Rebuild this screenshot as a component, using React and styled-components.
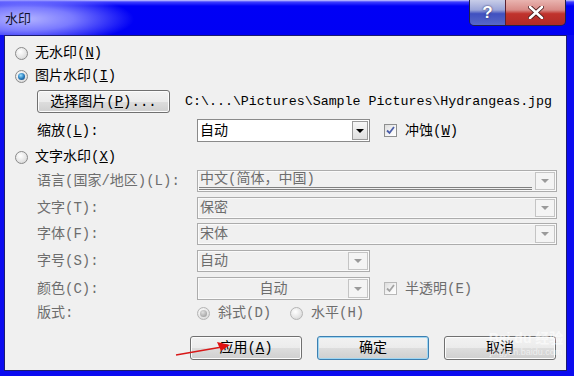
import React from 'react';
import styled, { createGlobalStyle, css } from 'styled-components';

const GlobalStyle = createGlobalStyle`
  html, body {
    margin: 0;
    padding: 0;
    background: #0a0af2;
  }
  body {
    font-family: "Liberation Mono", "Noto Sans CJK SC", monospace;
    font-size: 14px;
  }
`;

const Window = styled.div`
  position: relative;
  width: 574px;
  height: 376px;
  display: flex;
  flex-direction: column;
  background: #0b0bf0;
  overflow: hidden;
`;

const TitleBar = styled.div`
  height: 35px;
  flex: none;
  display: flex;
  align-items: flex-start;
  background:
    radial-gradient(ellipse 110px 26px at 24px 19px, #b4b4ff 0%, #7a7aff 45%, rgba(40, 40, 255, 0) 100%),
    linear-gradient(to bottom, #d0d0ff 0, #4040ff 2px, #0000f6 6px, #0000f4 100%);
`;

const Title = styled.div`
  padding: 10px 0 0 5px;
  line-height: 16px;
  font-family: "Noto Sans CJK SC", sans-serif;
  font-size: 13px;
  color: #10102a;
`;

const Controls = styled.div`
  margin-left: auto;
  margin-right: 8px;
  display: flex;
  height: 25px;
  border: 1px solid #20204a;
  border-top: none;
  border-radius: 0 0 5px 5px;
  overflow: hidden;
`;

const CapButton = styled.div`
  display: flex;
  align-items: center;
  justify-content: center;
  width: ${p => p.$w}px;
  height: 100%;
  font-family: "Liberation Sans", sans-serif;
  font-weight: bold;
  font-size: 17px;
  color: #fff;
  text-shadow: 0 0 2px #20205a;
  ${p => p.$close ? css`
    background: linear-gradient(to bottom, #e9b4b0 0%, #d88a86 40%, #c0322c 55%, #b02a26 100%);
    border-left: 1px solid #5a2030;
  ` : css`
    background: linear-gradient(to bottom, #c8cde8 0%, #9aa4d8 40%, #4050c0 55%, #5868c8 100%);
  `}
`;

const Frame = styled.div`
  flex: 1;
  display: flex;
  padding: 0 7px 5px 4px;
`;

const Panel = styled.div`
  flex: 1;
  display: flex;
  flex-direction: column;
  padding-top: 6px;
  background: #f0f0f0;
  border: 1px solid #1c1c70;
  color: #000;
`;

const Row = styled.div`
  display: flex;
  align-items: center;
  flex: none;
  height: ${p => p.$h}px;
  padding-left: ${p => p.$indent}px;
  line-height: 16px;
  white-space: nowrap;
  color: ${p => (p.$disabled ? '#6d6d6d' : '#000')};
`;

const Radio = styled.span`
  position: relative;
  flex: none;
  width: 13px;
  height: 13px;
  box-sizing: border-box;
  border-radius: 50%;
  border: 1px solid ${p => (p.$disabled ? '#b4b4b4' : '#8a8a8a')};
  background: radial-gradient(circle at 40% 35%, #ffffff 0%, #e6e6e6 55%, #cfcfcf 100%);
  margin-right: ${p => p.$gap || 7}px;
  ${p => p.$checked && css`
    &::after {
      content: '';
      position: absolute;
      left: 2px;
      top: 2px;
      width: 7px;
      height: 7px;
      border-radius: 50%;
      background: ${p.$disabled
        ? 'radial-gradient(circle at 40% 35%, #e0e0e0 0%, #a8a8a8 70%, #909090 100%)'
        : 'radial-gradient(circle at 40% 35%, #9be0ff 0%, #2a7fc0 50%, #123a6a 100%)'};
    }
  `}
`;

const Label = styled.span`
  width: ${p => (p.$w ? `${p.$w}px` : 'auto')};
  flex: none;
`;

const PushButton = styled.div`
  display: flex;
  align-items: center;
  justify-content: center;
  flex: none;
  box-sizing: border-box;
  width: ${p => p.$w}px;
  height: ${p => p.$h || 24}px;
  border-radius: 3px;
  border: 1px solid ${p => (p.$default ? '#3c7fb1' : '#707070')};
  background: linear-gradient(to bottom, #f2f2f2 0%, #ebebeb 50%, #dddddd 51%, #cfcfcf 100%);
  box-shadow: inset 0 0 0 1px ${p => (p.$default ? '#9fd6f2' : '#fcfcfc')};
  line-height: 16px;
`;

const PathText = styled.span`
  margin-left: 15px;
  font-family: "Liberation Mono", monospace;
  font-size: 13.3px;
`;

const SelectBox = styled.div`
  display: flex;
  flex: none;
  box-sizing: border-box;
  width: ${p => p.$w}px;
  height: ${p => p.$h}px;
  border: 1px solid ${p => (p.$enabled ? '#8a8a8a' : '#acacac')};
  background: ${p => (p.$enabled ? '#fff' : '#f0f0f0')};
  box-shadow: ${p => (p.$enabled ? 'none' : 'inset 0 0 0 1px #fafafa')};
  color: ${p => (p.$enabled ? '#000' : '#6d6d6d')};
`;

const SelectText = styled.div`
  flex: 1;
  display: flex;
  align-items: center;
  justify-content: ${p => (p.$center ? 'center' : 'flex-start')};
  padding-left: 2px;
  ${p => p.$underline && css`
    margin: 0 2px 1px 1px;
    padding-left: 1px;
    border-bottom: 3px double #808080;
  `}
`;

const DropButton = styled.div`
  display: flex;
  align-items: center;
  justify-content: center;
  width: ${p => (p.$enabled ? 16 : 20)}px;
  margin: 1px;
  box-sizing: border-box;
  border: 1px solid ${p => (p.$enabled ? '#9a9a9a' : '#c4c4c4')};
  background: ${p => (p.$enabled ? 'linear-gradient(#f6f6f6, #e0e0e0)' : '#f4f4f4')};
`;

const Arrow = styled.span`
  width: 0;
  height: 0;
  border-left: 4px solid transparent;
  border-right: 4px solid transparent;
  border-top: 4px solid ${p => (p.$enabled ? '#000' : '#9a9a9a')};
`;

const CheckWrap = styled.span`
  display: flex;
  align-items: center;
  margin-left: 14px;
  color: ${p => (p.$disabled ? '#6d6d6d' : '#000')};
`;

const CheckBox = styled.span`
  display: flex;
  align-items: center;
  justify-content: center;
  flex: none;
  width: 13px;
  height: 13px;
  box-sizing: border-box;
  margin-right: 8px;
  border: 1px solid ${p => (p.$disabled ? '#b8b8b8' : '#8e8f8f')};
  background: linear-gradient(135deg, #dcdcdc 0%, #f6f6f6 60%, #ffffff 100%);
`;

const ButtonRow = styled.div`
  display: flex;
  justify-content: flex-end;
  gap: 15px;
  padding: 12px 10px 0 0;
`;

const Arrowhead = styled.svg`
  position: absolute;
  left: 170px;
  top: 336px;
`;

const Watermark = styled.div`
  position: absolute;
  left: 488px;
  top: 329px;
  width: 76px;
  display: flex;
  flex-direction: column;
  align-items: center;
  color: rgba(255, 255, 255, 0.6);
  font-family: "Liberation Sans", "Noto Sans CJK SC", sans-serif;
  pointer-events: none;
`;

const WatermarkBig = styled.span`
  font-size: 14px;
  font-weight: bold;
  line-height: 18px;
`;

const WatermarkSmall = styled.span`
  font-size: 9px;
  line-height: 11px;
`;

const Check = ({ disabled }) => (
  <svg width="9" height="9" viewBox="0 0 9 9">
    <path d="M1 4.5 L3.5 7 L8 1" fill="none" stroke={disabled ? '#a4a4a4' : '#4b5ea8'} strokeWidth="1.8" />
  </svg>
);

const Select = ({ w, h, enabled, center, underline, children }) => (
  <SelectBox $w={w} $h={h} $enabled={enabled}>
    <SelectText $center={center} $underline={underline}>{children}</SelectText>
    <DropButton $enabled={enabled}><Arrow $enabled={enabled} /></DropButton>
  </SelectBox>
);

export default function App() {
  return (
    <>
      <GlobalStyle />
      <Window>
        <TitleBar>
          <Title>水印</Title>
          <Controls>
            <CapButton $w={35}>?</CapButton>
            <CapButton $w={59} $close>
              <svg width="16" height="13" viewBox="0 0 16 13">
                <path d="M2 1 L14 12 M14 1 L2 12" stroke="#4a1a1a" strokeWidth="4.4" strokeLinecap="round" />
                <path d="M2 1 L14 12 M14 1 L2 12" stroke="#fff" strokeWidth="2.6" strokeLinecap="round" />
              </svg>
            </CapButton>
          </Controls>
        </TitleBar>
        <Frame>
          <Panel>
            <Row $h={22} $indent={10}>
              <Radio />
              <span>无水印(<u>N</u>)</span>
            </Row>
            <Row $h={24} $indent={10}>
              <Radio $checked />
              <span>图片水印(<u>I</u>)</span>
            </Row>
            <Row $h={27} $indent={32}>
              <PushButton $w={133} $h={23}>选择图片(<u>P</u>)...</PushButton>
              <PathText>C:\...\Pictures\Sample Pictures\Hydrangeas.jpg</PathText>
            </Row>
            <Row $h={31} $indent={32}>
              <Label $w={160}>缩放(<u>L</u>):</Label>
              <Select w={173} h={23} enabled>自动</Select>
              <CheckWrap>
                <CheckBox><Check /></CheckBox>
                <span>冲蚀(<u>W</u>)</span>
              </CheckWrap>
            </Row>
            <Row $h={22} $indent={10}>
              <Radio />
              <span>文字水印(<u>X</u>)</span>
            </Row>
            <Row $h={26} $indent={32} $disabled>
              <Label $w={160}>语言(国家/地区)(L):</Label>
              <Select w={360} h={22} underline>中文(简体，中国)</Select>
            </Row>
            <Row $h={27} $indent={32} $disabled>
              <Label $w={160}>文字(T):</Label>
              <Select w={360} h={22}>保密</Select>
            </Row>
            <Row $h={26} $indent={32} $disabled>
              <Label $w={160}>字体(F):</Label>
              <Select w={360} h={22}>宋体</Select>
            </Row>
            <Row $h={28} $indent={32} $disabled>
              <Label $w={160}>字号(S):</Label>
              <Select w={173} h={22}>自动</Select>
            </Row>
            <Row $h={27} $indent={32} $disabled>
              <Label $w={160}>颜色(C):</Label>
              <Select w={173} h={23} center>自动</Select>
              <CheckWrap $disabled>
                <CheckBox $disabled><Check disabled /></CheckBox>
                <span>半透明(E)</span>
              </CheckWrap>
            </Row>
            <Row $h={22} $indent={32} $disabled>
              <Label $w={160}>版式:</Label>
              <Radio $checked $disabled $gap={8} />
              <Label $w={72}>斜式(D)</Label>
              <Radio $disabled $gap={8} />
              <span>水平(H)</span>
            </Row>
            <ButtonRow>
              <PushButton $w={112}>应用(<u>A</u>)</PushButton>
              <PushButton $w={112} $default>确定</PushButton>
              <PushButton $w={112}>取消</PushButton>
            </ButtonRow>
          </Panel>
        </Frame>
        <Watermark>
          <WatermarkBig>Bai du 经验</WatermarkBig>
          <WatermarkSmall>jingyan.baidu.com</WatermarkSmall>
        </Watermark>
        <Arrowhead width="70" height="28" viewBox="0 0 70 28">
          <path d="M6 19 L52 11" stroke="#d81818" strokeWidth="1.4" />
          <path d="M60 9 L47 6 L51 15 Z" fill="#e01010" />
        </Arrowhead>
      </Window>
    </>
  );
}
